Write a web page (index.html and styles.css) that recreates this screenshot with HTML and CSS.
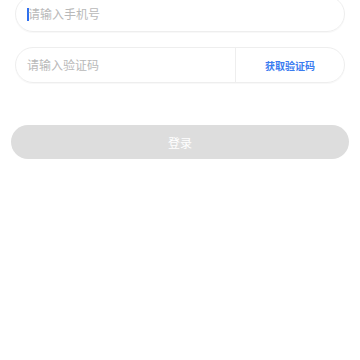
FILE: index.html
```
<!DOCTYPE html>
<html>
<head>
<meta charset="utf-8">
<link rel="stylesheet" href="styles.css">
</head>
<body>
<div class="page">
  <div class="field">
    <span class="caret"></span><span class="ph">请输入手机号</span>
  </div>
  <div class="field code">
    <span class="ph grow">请输入验证码</span>
    <span class="divider"></span>
    <span class="get">获取验证码</span>
  </div>
  <div class="btn">登录</div>
</div>
</body>
</html>
```
FILE: styles.css
```
html, body {
  margin: 0;
  padding: 0;
  background: #fff;
}
body {
  font-family: "Noto Sans CJK SC", "Noto Sans", sans-serif;
  width: 360px;
  height: 360px;
  overflow: hidden;
}
.page {
  display: flex;
  flex-direction: column;
  padding: 0 15px;
  margin-top: -4px;
}
.field {
  height: 36px;
  box-sizing: border-box;
  border: 1px solid #eeeeee;
  border-radius: 18px;
  display: flex;
  align-items: center;
  padding-left: 11px;
  box-shadow: 0 1px 1px rgba(0,0,0,0.03);
}
.field.code {
  margin-top: 15px;
  padding-right: 0;
}
.caret {
  width: 2px;
  height: 13px;
  background: #2f6fef;
  margin-right: -1px;
}
.ph {
  font-size: 12px;
  color: #b9b9b9;
  line-height: 16px;
}
.grow {
  flex: 1;
}
.divider {
  width: 1px;
  align-self: stretch;
  background: #eeeeee;
}
.get {
  width: 108px;
  text-align: center;
  font-size: 10px;
  color: #3b7cf0;
  font-weight: 600;
}
.btn {
  margin: 42px -4px 0;
  height: 34px;
  border-radius: 17px;
  background: #dddddd;
  color: #fff;
  font-size: 12px;
  display: flex;
  align-items: center;
  justify-content: center;
}
```
